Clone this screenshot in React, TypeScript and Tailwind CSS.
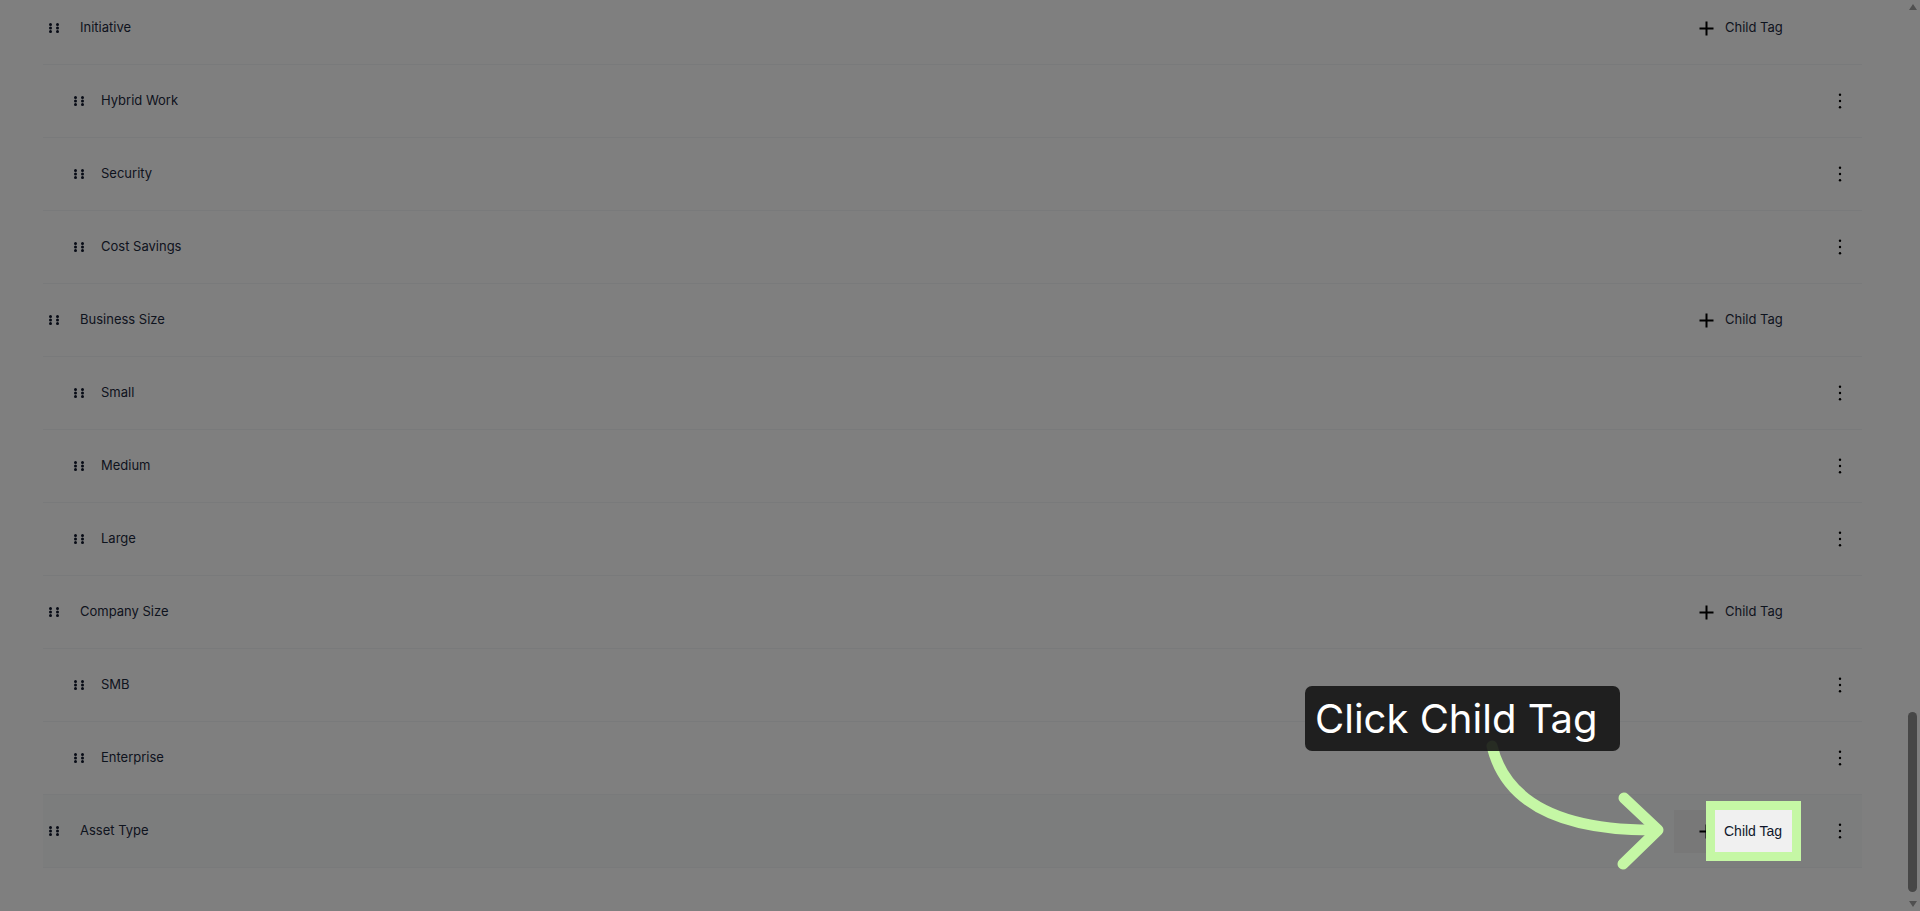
import { Fragment } from 'react'

type TagRow = {
  label: string
  child?: boolean
  hovered?: boolean
}

const rows: TagRow[] = [
  { label: 'Initiative' },
  { label: 'Hybrid Work', child: true },
  { label: 'Security', child: true },
  { label: 'Cost Savings', child: true },
  { label: 'Business Size' },
  { label: 'Small', child: true },
  { label: 'Medium', child: true },
  { label: 'Large', child: true },
  { label: 'Company Size' },
  { label: 'SMB', child: true },
  { label: 'Enterprise', child: true },
  { label: 'Asset Type', hovered: true },
]

// six-dot drag handle
function Grip() {
  const xs = [1.5, 8.5]
  const ys = [1.5, 5, 8.5]
  return (
    <svg width="10" height="10" viewBox="0 0 10 10" className="shrink-0 text-slate-900">
      {ys.map((y) => (
        <Fragment key={y}>
          {xs.map((x) => (
            <circle key={x} cx={x} cy={y} r="1.5" fill="currentColor" />
          ))}
        </Fragment>
      ))}
    </svg>
  )
}

function PlusIcon() {
  return (
    <svg width="15" height="15" viewBox="0 0 15 15" className="shrink-0 text-black">
      <path d="M7.5 0.5v14M0.5 7.5h14" stroke="currentColor" strokeWidth="2" />
    </svg>
  )
}

function Kebab() {
  return (
    <svg width="4" height="16" viewBox="0 0 4 16" className="text-black">
      <circle cx="2" cy="1.7" r="1.2" fill="currentColor" />
      <circle cx="2" cy="8" r="1.2" fill="currentColor" />
      <circle cx="2" cy="14.3" r="1.2" fill="currentColor" />
    </svg>
  )
}

function Row({ row }: { row: TagRow }) {
  return (
    <div
      className={`flex h-[73px] items-center border-b border-gray-100 pr-[10px] ${
        row.hovered ? 'bg-gray-50' : 'bg-white'
      } ${row.child ? 'pl-[31px]' : 'pl-[6px]'}`}
    >
      <Grip />
      <span className={`text-[13px] text-slate-800 ${row.child ? 'ml-[17px]' : 'ml-[21px]'}`}>
        {row.label}
      </span>
      <div className="ml-auto flex items-center">
        {!row.child ? (
          <button
            className={`flex h-[43px] w-[126px] items-center gap-[11px] pl-[25px] text-[13px] text-slate-800 ${
              row.hovered ? 'bg-[#f0f0f0]' : ''
            }`}
          >
            <PlusIcon />
            Child Tag
          </button>
        ) : (
          <div className="w-[126px]" />
        )}
        <div className="ml-[28px] flex h-[24px] w-[24px] items-center justify-center">
          {(row.child || row.hovered) && <Kebab />}
        </div>
      </div>
    </div>
  )
}

function Scrollbar() {
  return (
    <aside className="flex w-[15px] shrink-0 flex-col items-center bg-white">
      <div className="mt-[4px] h-0 w-0 border-x-[4px] border-b-[6px] border-x-transparent border-b-[#a0a0a0]" />
      <div className="mt-[702px] h-[180px] w-[9px] rounded-full bg-[#8e8e8e]" />
      <div className="mt-[9px] h-0 w-0 border-x-[4px] border-t-[6px] border-x-transparent border-t-[#a0a0a0]" />
    </aside>
  )
}

export default function App() {
  return (
    <div className="relative flex h-[911px] w-full overflow-hidden bg-white font-['Inter','Noto_Sans',sans-serif]">
      <main className="flex-1 px-[43px]">
        <div className="-mt-[8px]">
          {rows.map((row) => (
            <Row key={row.label} row={row} />
          ))}
        </div>
      </main>
      <Scrollbar />

      {/* step dimming */}
      <div className="pointer-events-none absolute inset-0 z-10 bg-black/50" />

      {/* guide arrow */}
      <svg
        className="pointer-events-none absolute inset-0 z-20"
        width="1920"
        height="911"
        viewBox="0 0 1920 911"
      >
        <path
          d="M1492 746 C1505 800 1555 830 1652 830"
          fill="none"
          stroke="#c5f7a5"
          strokeWidth="11"
          strokeLinecap="round"
        />
        <path
          d="M1624 798 L1658 830 L1623 864"
          fill="none"
          stroke="#c5f7a5"
          strokeWidth="11"
          strokeLinecap="round"
          strokeLinejoin="round"
        />
      </svg>

      {/* highlighted target */}
      <div className="absolute left-[1706px] top-[801px] z-20 flex h-[60px] w-[95px] items-center border-[9px] border-[#c5f7a5] bg-[#f0f0f0] pl-[9px] font-['Liberation_Sans',Arial,sans-serif] text-[14px] text-slate-900">
        Child Tag
      </div>

      {/* tooltip */}
      <div className="absolute left-[1305px] top-[686px] z-30 flex h-[65px] w-[315px] items-center rounded-[7px] bg-[#151515]/90 pl-[10px] text-[40px] leading-none text-white">
        Click Child Tag
      </div>
    </div>
  )
}
